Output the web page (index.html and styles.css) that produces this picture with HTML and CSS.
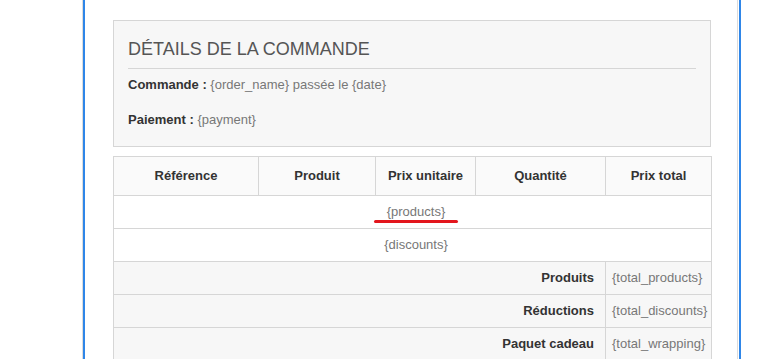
FILE: index.html
```html
<!DOCTYPE html>
<html lang="fr">
<head>
<meta charset="utf-8">
<title>Détails de la commande</title>
<link rel="stylesheet" href="styles.css">
</head>
<body>
<div class="frame">
  <div class="frame-inner">
    <section class="panel">
      <h2 class="panel-title">DÉTAILS DE LA COMMANDE</h2>
      <p class="line first"><strong>Commande :</strong> <span class="var">{order_name} passée le {date}</span></p>
      <p class="line"><strong>Paiement :</strong> <span class="var">{payment}</span></p>
    </section>

    <table class="order">
      <colgroup>
        <col class="c-ref">
        <col class="c-prod">
        <col class="c-unit">
        <col class="c-qty">
        <col class="c-total">
      </colgroup>
      <thead>
        <tr>
          <th>Référence</th>
          <th>Produit</th>
          <th>Prix unitaire</th>
          <th>Quantité</th>
          <th>Prix total</th>
        </tr>
      </thead>
      <tbody>
        <tr><td colspan="5" class="span-row"><span class="var marked">{products}</span></td></tr>
        <tr><td colspan="5" class="span-row"><span class="var">{discounts}</span></td></tr>
        <tr class="sum">
          <td colspan="4" class="sum-label">Produits</td>
          <td class="sum-value var">{total_products}</td>
        </tr>
        <tr class="sum">
          <td colspan="4" class="sum-label">Réductions</td>
          <td class="sum-value var">{total_discounts}</td>
        </tr>
        <tr class="sum">
          <td colspan="4" class="sum-label">Paquet cadeau</td>
          <td class="sum-value var">{total_wrapping}</td>
        </tr>
      </tbody>
    </table>
  </div>
</div>
</body>
</html>
```

FILE: styles.css
```css
html, body {
  margin: 0;
  padding: 0;
  background: #ffffff;
}

body {
  font-family: "Liberation Sans", Arial, sans-serif;
  font-size: 13px;
  color: #333333;
}

/* editor frame with its blue side rails */
.frame {
  margin-left: 82px;
  width: 659px;
  min-height: 359px;
  box-sizing: border-box;
  border-left: 1px solid #dcdcdc;
  border-right: 2px solid #2f86e8;
}

.frame-inner {
  min-height: 359px;
  margin-right: 1px;
  border-left: 2px solid #2f86e8;
  border-right: 1px solid #dcdcdc;
  padding: 20px 26px 0 28px;
}

/* order details box */
.panel {
  background: #f7f7f7;
  border: 1px solid #d6d6d6;
  padding: 0 14px 17px;
}

.panel-title {
  margin: 18px 0 0;
  padding-bottom: 9px;
  border-bottom: 1px solid #d6d6d6;
  font-size: 18px;
  font-weight: normal;
  line-height: 20px;
  color: #555555;
}

.line {
  margin: 17px 0 0;
  line-height: 18px;
}

.line.first {
  margin-top: 7px;
}

.line strong {
  color: #333333;
}

.var {
  color: #777777;
}

/* products table */
.order {
  width: 598px;
  margin-top: 9px;
  border-collapse: collapse;
  table-layout: fixed;
}

.c-ref { width: 145px; }
.c-prod { width: 117px; }
.c-unit { width: 100px; }
.c-qty { width: 130px; }
.c-total { width: 106px; }

.order th,
.order td {
  border: 1px solid #d6d6d6;
  line-height: 18px;
}

.order th {
  background: #fafafa;
  padding: 10px 4px;
  font-weight: bold;
  text-align: center;
  color: #333333;
}

.order td {
  padding: 7px 0;
}

.span-row {
  text-align: center;
  padding-left: 7px !important;
}

.marked {
  position: relative;
}

/* red pen stroke under the products placeholder */
.marked::after {
  content: "";
  position: absolute;
  left: -13px;
  right: -13px;
  top: calc(100% + 1px);
  height: 3px;
  border-radius: 2px;
  background: #e3161d;
}

.sum td {
  background: #f7f7f7;
}

.sum-label {
  text-align: right;
  font-weight: bold;
  padding-right: 11px !important;
  color: #333333;
}

.sum-value {
  padding-left: 6px !important;
  white-space: nowrap;
}
```
